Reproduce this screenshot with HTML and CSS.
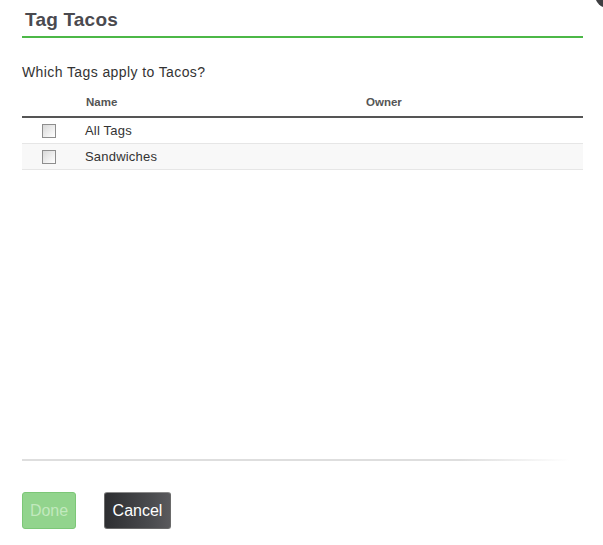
FILE: index.html
```html
<!DOCTYPE html>
<html lang="en">
<head>
  <meta charset="UTF-8">
  <title>Tag Tacos</title>
  <link rel="stylesheet" href="styles.css">
</head>
<body>

  <div class="dialog">
    <a class="close" href="#" title="Close"></a>

    <h2 class="title">Tag Tacos</h2>

    <div class="content">
      <p class="question">Which Tags apply to Tacos?</p>

      <table class="tags">
        <thead>
          <tr>
            <th class="check"></th>
            <th class="name">Name</th>
            <th class="owner">Owner</th>
          </tr>
        </thead>
        <tbody>
          <tr>
            <td class="check"><input type="checkbox"></td>
            <td class="name">All Tags</td>
            <td class="owner"></td>
          </tr>
          <tr class="alt">
            <td class="check"><input type="checkbox"></td>
            <td class="name">Sandwiches</td>
            <td class="owner"></td>
          </tr>
        </tbody>
      </table>
    </div>

    <div class="footer">
      <div class="divider"></div>
      <div class="buttons">
        <button class="done" disabled>Done</button>
        <button class="cancel">Cancel</button>
      </div>
    </div>
  </div>

</body>
</html>
```

FILE: styles.css
```css
html {
  box-sizing: border-box;
  background: #fff;
}

*, *:before, *:after {
  box-sizing: inherit;
}

body {
  margin: 0;
  padding: 0;
  font-family: "Liberation Sans", Arial, sans-serif;
  color: #333;
  overflow: hidden;
}

.dialog {
  position: relative;
  display: flex;
  flex-direction: column;
  height: 545px;
  padding: 0 20px 16px 22px;
}

.close {
  position: absolute;
  top: -18px;
  right: -18px;
  width: 26px;
  height: 26px;
  border-radius: 50%;
  background: #3f3f42;
}

.title {
  margin: 0;
  padding: 8px 0 4px 3px;
  font-size: 19px;
  line-height: 24px;
  font-weight: bold;
  letter-spacing: 0.2px;
  color: #4a4a4f;
  border-bottom: 2px solid #4cb847;
}

.content {
  flex: 1;
}

.question {
  margin: 26px 0 7px;
  font-size: 14px;
  line-height: 17px;
  letter-spacing: 0.4px;
  color: #333;
}

.tags {
  width: 100%;
  border-collapse: separate;
  border-spacing: 0;
}

.tags th {
  padding: 8px 0 7px;
  font-size: 11.5px;
  line-height: 13px;
  font-weight: bold;
  color: #555;
  text-align: left;
  border-bottom: 2px solid #555;
}

.tags td {
  height: 26px;
  padding: 0;
  font-size: 13px;
  letter-spacing: 0.2px;
  color: #333;
  border-bottom: 1px solid #e6e6e6;
}

.tags .check {
  width: 63px;
  padding-left: 20px;
}

.tags .name {
  width: 281px;
}

.tags th.name {
  padding-left: 1px;
}

.tags tr.alt td {
  background: #f8f8f8;
}

.tags input {
  appearance: none;
  display: block;
  width: 14px;
  height: 14px;
  margin: 1px 0 0;
  border: 1px solid #8e8e8e;
  background: linear-gradient(135deg, #d8d8d8, #f4f4f4 70%, #fff);
}

.divider {
  height: 2px;
  margin-right: 13px;
  background: linear-gradient(to right, #dedede, #dedede 80%, rgba(222,222,222,0));
}

.buttons {
  display: flex;
  gap: 28px;
  margin-top: 31px;
}

.buttons button {
  height: 37px;
  padding: 0;
  font-family: "Liberation Sans", Arial, sans-serif;
  font-size: 16px;
  border-radius: 3px;
}

.done {
  width: 54px;
  background: #92d48d;
  border: 1px solid #7cc777;
  color: #c2e9be;
}

.cancel {
  width: 67px;
  background: linear-gradient(to right, #2d2e31, #4a4b4e 70%, #5a5a5d);
  border: 1px solid #6a6a6a;
  border-top-color: #8a8a8a;
  color: #fff;
}
```
